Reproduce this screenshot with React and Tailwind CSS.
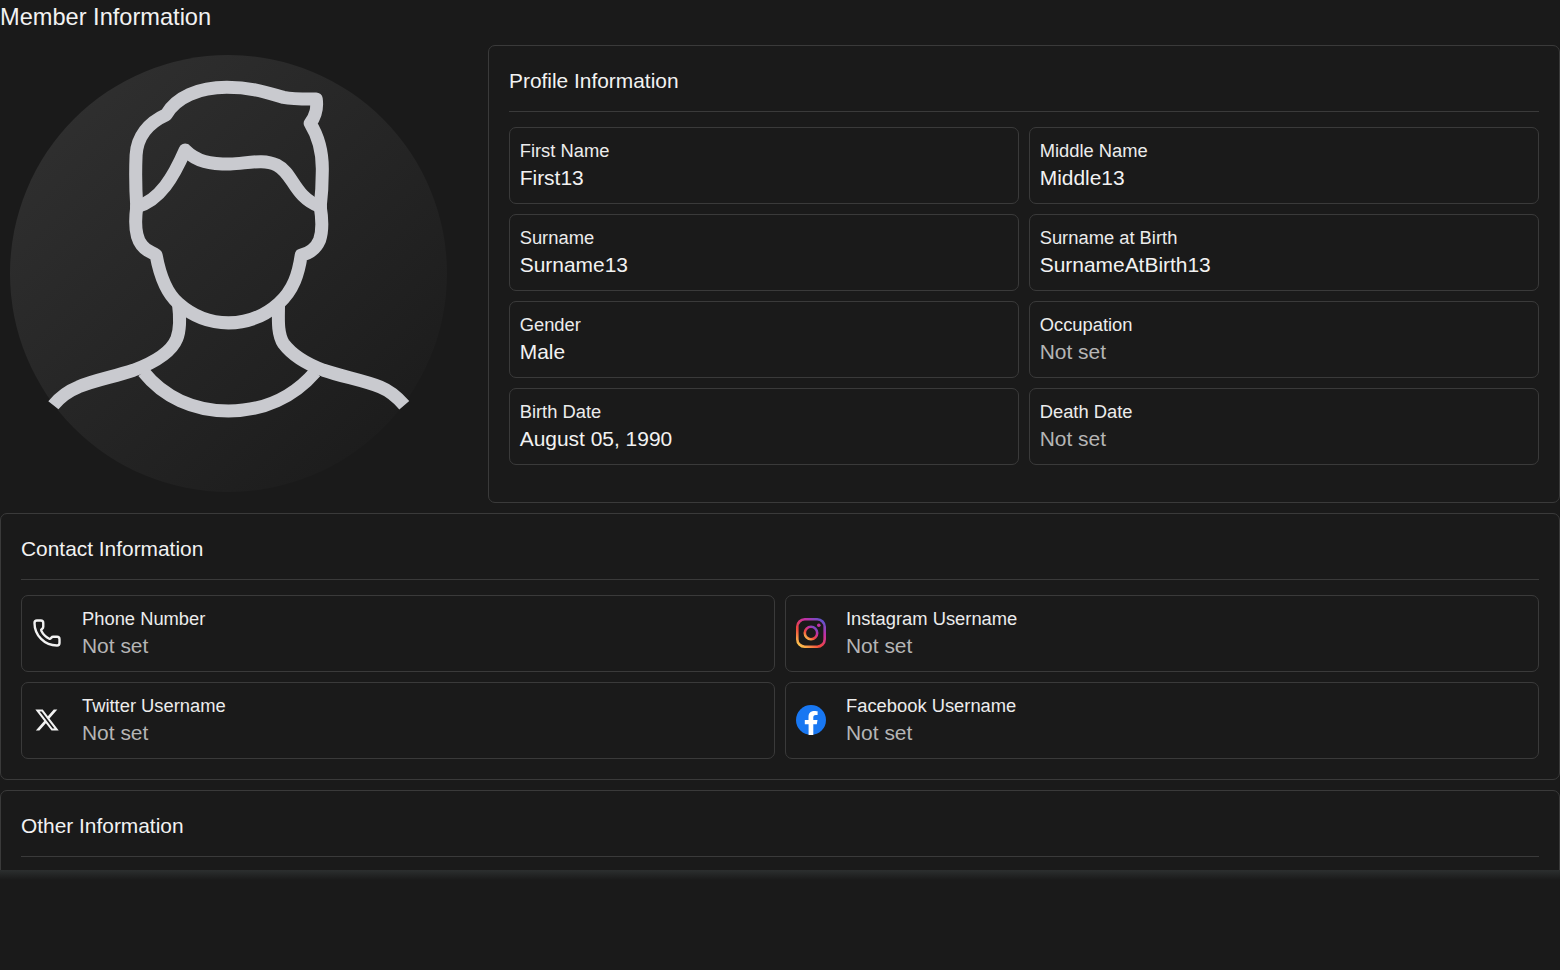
import React from 'react';
import { Phone } from 'lucide-react';
import { FaXTwitter } from 'react-icons/fa6';

const profileFields = [
  { label: 'First Name', value: 'First13' },
  { label: 'Middle Name', value: 'Middle13' },
  { label: 'Surname', value: 'Surname13' },
  { label: 'Surname at Birth', value: 'SurnameAtBirth13' },
  { label: 'Gender', value: 'Male' },
  { label: 'Occupation' },
  { label: 'Birth Date', value: 'August 05, 1990' },
  { label: 'Death Date' },
];

const Avatar = () => (
  <svg width="437" height="437" viewBox="30 45 1310 1310" fill="none" className="block">
    <defs>
      <linearGradient id="avatarBg" x1="0.12" y1="0.12" x2="0.85" y2="0.9">
        <stop offset="0" stopColor="#2f2f2f" />
        <stop offset="1" stopColor="#1c1c1c" />
      </linearGradient>
    </defs>
    <circle cx="685" cy="700" r="655" fill="url(#avatarBg)" />
    <g stroke="#c9cacf" strokeWidth="39" strokeLinejoin="round">
      <g strokeLinecap="round">
        <path d="M410 500C406 440 406 390 408 345C411 290 445 248 498 224C528 172 595 142 680 142C760 142 800 158 850 172C880 178 920 177 948 177C952 205 948 225 930 250C958 295 968 350 966 400C966 430 964 465 960 500" />
        <path d="M410 500C480 480 520 410 555 330C590 365 630 372 690 372C740 370 790 355 830 375C880 400 880 470 960 500" />
        <path d="M410 500C404 545 405 590 425 615C440 635 455 635 468 645C480 710 500 760 535 790C580 830 630 848 685 848C740 848 790 830 835 790C880 750 895 700 903 645C925 640 945 630 958 600C968 570 965 530 960 500" />
      </g>
      <path d="M535 790C540 830 540 870 530 895C510 945 440 975 400 990C340 1010 280 1020 235 1040C205 1052 180 1070 160 1095" />
      <path d="M835 790C835 830 830 880 850 910C880 950 930 975 970 990C1030 1010 1090 1020 1140 1040C1170 1052 1195 1075 1212 1095" />
      <path d="M430 995C490 1070 580 1112 685 1112C790 1112 880 1070 945 995" />
    </g>
  </svg>
);

const InstagramIcon = () => (
  <svg width="30" height="30" viewBox="0 0 30 30" fill="none">
    <defs>
      <linearGradient id="igGrad" x1="0.1" y1="1" x2="0.9" y2="0">
        <stop offset="0" stopColor="#fdc94e" />
        <stop offset="0.35" stopColor="#f2483c" />
        <stop offset="0.7" stopColor="#c22fa4" />
        <stop offset="1" stopColor="#5b55cf" />
      </linearGradient>
    </defs>
    <rect x="1.3" y="1.3" width="27.4" height="27.4" rx="7.5" stroke="url(#igGrad)" strokeWidth="2.6" />
    <circle cx="15" cy="15" r="6.2" stroke="url(#igGrad)" strokeWidth="2.6" />
    <circle cx="22.8" cy="7.2" r="1.8" fill="#c22fa4" />
  </svg>
);

const FacebookIcon = () => (
  <svg width="30" height="30" viewBox="0 0 30 30">
    <circle cx="15" cy="15" r="15" fill="#1877f2" />
    <path
      d="M20.8 19.3l.7-4.3h-4.2v-2.8c0-1.2.6-2.3 2.4-2.3h1.9V6.2s-1.7-.3-3.4-.3c-3.4 0-5.7 2.1-5.7 5.8V15H8.8v4.3h3.8V30h4.7V19.3h3.5z"
      fill="#fff"
    />
  </svg>
);

const contactFields = [
  { label: 'Phone Number', icon: <Phone size={30} strokeWidth={1.9} color="#f2f2f2" /> },
  { label: 'Instagram Username', icon: <InstagramIcon /> },
  { label: 'Twitter Username', icon: <FaXTwitter size={26} color="#f2f2f2" /> },
  { label: 'Facebook Username', icon: <FacebookIcon /> },
];

const FieldText = ({ label, value }) => (
  <div className="flex flex-col">
    <span className="text-[18.35px] leading-[26px] text-[#ececec]">{label}</span>
    <span className={`text-[20.95px] leading-[28px] ${value ? 'text-[#f2f2f2]' : 'text-[#b5b5b5]'}`}>
      {value || 'Not set'}
    </span>
  </div>
);

const SectionTitle = ({ children }) => (
  <div className="h-[66px] pt-[20px] border-b border-[#3a3a3a]">
    <h2 className="text-[20.9px] leading-[30px] text-[#f2f2f2]">{children}</h2>
  </div>
);

const App = () => {
  return (
    <div className="min-h-screen bg-[#1a1a1a] font-['Liberation_Sans',Arial,sans-serif]">
      <div className="h-[870px] overflow-hidden">
        <h1 className="h-[45px] text-[23.6px] leading-[35px] text-[#f2f2f2]">Member Information</h1>

        <div className="flex">
          <div className="w-[488px] shrink-0 pl-[10px] pt-[10px]">
            <Avatar />
          </div>
          <section className="flex-1 h-[458px] border border-[#3a3a3a] rounded-[7px] px-[20px]">
            <SectionTitle>Profile Information</SectionTitle>
            <div className="grid grid-cols-2 gap-[10px] mt-[15px]">
              {profileFields.map((field) => (
                <div key={field.label} className="h-[77px] border border-[#3a3a3a] rounded-[7px] px-[9.7px] py-[10px]">
                  <FieldText label={field.label} value={field.value} />
                </div>
              ))}
            </div>
          </section>
        </div>

        <section className="mt-[10px] h-[267px] border border-[#3a3a3a] rounded-[7px] px-[20px]">
          <SectionTitle>Contact Information</SectionTitle>
          <div className="grid grid-cols-2 gap-[10px] mt-[15px]">
            {contactFields.map((field) => (
              <div key={field.label} className="h-[77px] border border-[#3a3a3a] rounded-[7px] pl-[10px] py-[10px] flex gap-[20px]">
                <div className="w-[30px] h-[54px] flex items-center justify-center shrink-0">{field.icon}</div>
                <FieldText label={field.label} />
              </div>
            ))}
          </div>
        </section>

        <section className="mt-[10px] h-[200px] border border-[#3a3a3a] rounded-[7px] px-[20px]">
          <SectionTitle>Other Information</SectionTitle>
        </section>
      </div>
      <div className="h-[10px] bg-gradient-to-b from-[#2c2f2f] to-[#1a1a1a]" />
    </div>
  );
};

export default App;
